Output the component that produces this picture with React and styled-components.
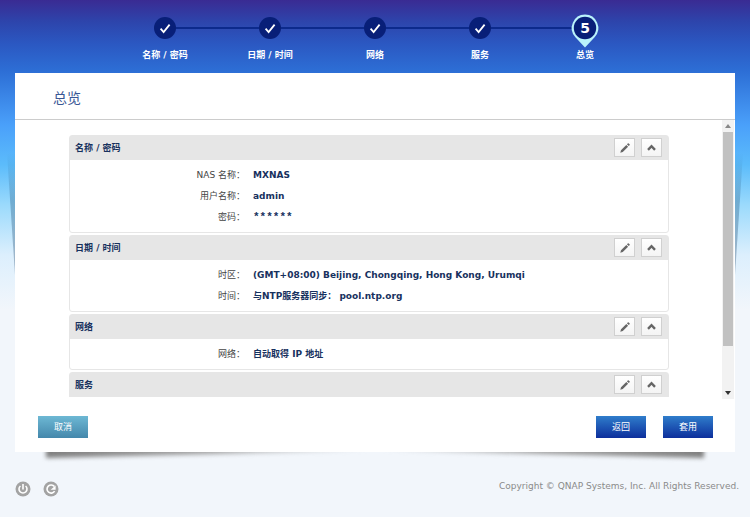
import { useRef, useState } from "react";
import styled, { createGlobalStyle } from "styled-components";

const GlobalStyle = createGlobalStyle`
  * {
    box-sizing: border-box;
  }

  body {
    margin: 0;
    color: #444;
    font-family: "DejaVu Sans", "Noto Sans CJK SC", sans-serif;
    font-size: 9px;
    line-height: 12px;
  }

  button {
    padding: 0;
    border: none;
    font: inherit;
    cursor: pointer;
  }
`;

const Page = styled.div`
  display: flex;
  flex-direction: column;
  height: 100vh;
  min-height: 400px;
  overflow: hidden;
  background: linear-gradient(
    #3a2b93 0,
    #2d45ac 22px,
    #2b58c2 44px,
    #2d6fd6 72px,
    #4aa0fa 125px,
    #5cbcfb 165px,
    #9bdafc 205px,
    #dceffd 255px,
    #f2f6fb 310px
  );
`;

const Steps = styled.ol`
  display: flex;
  justify-content: center;
  flex: none;
  height: 73px;
  margin: 0;
  padding: 15px 0 0;
  list-style: none;
`;

const Step = styled.li`
  display: flex;
  flex-direction: column;
  gap: 8px;
  width: 105px;
  color: #fff;
  font-weight: bold;
  text-align: center;
`;

const MarkerRow = styled.div`
  display: flex;
  align-items: center;
  height: 26px;

  & svg {
    flex: none;
    overflow: visible;
  }
`;

const Line = styled.span`
  flex: 1;
  height: 2px;
  background: ${(props) => (props.$hidden ? "transparent" : "#0c2a8c")};
`;

const Panel = styled.main`
  position: relative;
  z-index: 0;
  display: flex;
  flex: 1;
  flex-direction: column;
  min-height: 0;
  margin: 0 15px;
`;

const PanelBody = styled.div`
  display: flex;
  flex: 1;
  flex-direction: column;
  min-height: 0;
  background: #fff;
`;

const SideShadow = styled.span`
  position: absolute;
  z-index: -1;
  top: 80px;
  ${(props) => props.$side}: -8px;
  width: 8px;
  height: 122px;
  background: linear-gradient(
    rgba(30, 90, 140, 0),
    rgba(40, 90, 130, 0.35) 40%,
    rgba(60, 90, 120, 0.4)
  );
  clip-path: ${(props) =>
    props.$side === "left"
      ? "polygon(0 0, 100% 0, 100% 100%)"
      : "polygon(100% 0, 0 0, 0 100%)"};
`;

const Curl = styled.div`
  position: absolute;
  z-index: -1;
  inset: 0;
  filter: blur(2px);
`;

const CurlShadow = styled.span`
  position: absolute;
  bottom: -7px;
  ${(props) => props.$side}: 31px;
  width: 45%;
  height: 14px;
  background: linear-gradient(
    to ${(props) => (props.$side === "left" ? "right" : "left")},
    #808080,
    #a4a4a4 50%,
    rgba(200, 200, 200, 0)
  );
  clip-path: ${(props) =>
    props.$side === "left"
      ? "polygon(0 0, 100% 0, 100% 40%, 0 92%)"
      : "polygon(0 0, 100% 0, 100% 92%, 0 40%)"};
`;

const Title = styled.h1`
  flex: none;
  height: 47px;
  margin: 0;
  padding: 15px 38px;
  border-bottom: 1px solid #ccc;
  color: #3a5795;
  font-size: 14px;
  font-weight: normal;
  line-height: 20px;
`;

const ScrollArea = styled.div`
  display: flex;
  flex: 1;
  min-height: 0;
`;

const List = styled.div`
  display: flex;
  flex: 1;
  flex-direction: column;
  gap: 2px;
  margin-bottom: 2px;
  padding: 15px 53px 15px 54px;
  overflow: auto;
  scrollbar-width: none;
`;

const Group = styled.section`
  flex: none;
  border: 1px solid #e6e6e6;
  border-radius: 3px;
`;

const GroupHeader = styled.header`
  display: flex;
  align-items: center;
  gap: 6px;
  height: 24px;
  padding: 0 6px 1px 5px;
  background: #e6e6e6;
`;

const GroupTitle = styled.h2`
  flex: 1;
  margin: 0;
  color: #17315e;
  font-size: 9px;
`;

const IconButton = styled.button`
  display: flex;
  align-items: center;
  justify-content: center;
  width: 21px;
  height: 19px;
  border: 1px solid #d0d0d0;
  background: linear-gradient(#fff, #f4f4f4);
`;

const Fields = styled.dl`
  display: grid;
  grid-template-columns: 175px 1fr;
  column-gap: 8px;
  margin: 0;
  padding: 5px 0 4px;
  line-height: 21px;
`;

const Label = styled.dt`
  text-align: right;
`;

const Value = styled.dd`
  margin: 0;
  color: #17315e;
  font-weight: bold;
`;

const Masked = styled.span`
  font-family: "Liberation Mono", monospace;
  font-size: 11px;
`;

const ScrollBar = styled.div`
  display: flex;
  flex: none;
  flex-direction: column;
  width: 12px;
  margin-right: 1px;
  padding: 0 1px;
  background: #f2f2f2;
`;

const ScrollButton = styled.button`
  display: flex;
  align-items: center;
  justify-content: center;
  height: 12px;
  background: none;
`;

const Track = styled.div`
  flex: 1;
`;

const Thumb = styled.div`
  height: 84%;
  background: #c1c1c1;
`;

const Actions = styled.div`
  display: flex;
  flex: none;
  align-items: flex-start;
  gap: 17px;
  height: 53px;
  padding: 17px 22px 0 23px;
`;

const Button = styled.button`
  width: 50px;
  height: 22px;
  margin-right: ${(props) => (props.$light ? "auto" : "0")};
  background: ${(props) =>
    props.$light
      ? "linear-gradient(#6db8d4, #4487ab)"
      : "linear-gradient(#2f7dcb, #0d2f9c)"};
  color: #fff;
`;

const Footer = styled.footer`
  display: flex;
  flex: none;
  justify-content: space-between;
  height: 65px;
  padding: 28px 11px 0 15px;
  color: #8a8a8a;
`;

const PowerButtons = styled.div`
  display: flex;
  gap: 12px;
`;

const PowerButton = styled.button`
  width: 16px;
  height: 16px;
  margin-top: 1px;
  background: none;

  & svg {
    display: block;
  }
`;

const steps = ["名称 / 密码", "日期 / 时间", "网络", "服务", "总览"];

const groups = [
  {
    title: "名称 / 密码",
    fields: [
      { label: "NAS 名称：", value: "MXNAS" },
      { label: "用户名称：", value: "admin" },
      { label: "密码：", value: "******", masked: true },
    ],
  },
  {
    title: "日期 / 时间",
    fields: [
      {
        label: "时区：",
        value: "(GMT+08:00) Beijing, Chongqing, Hong Kong, Urumqi",
      },
      { label: "时间：", value: "与NTP服务器同步： pool.ntp.org" },
    ],
  },
  {
    title: "网络",
    fields: [{ label: "网络：", value: "自动取得 IP 地址" }],
  },
  {
    title: "服务",
    fields: [],
  },
];

function DoneMarker() {
  return (
    <svg width="22" height="22" viewBox="0 0 22 22">
      <circle cx="11" cy="11" r="11" fill="#081f78" />
      <path
        d="M6.6 11.6 9.6 15 15.6 7.6"
        fill="none"
        stroke="#fff"
        strokeWidth="1.8"
      />
    </svg>
  );
}

function CurrentMarker({ number }) {
  return (
    <svg width="26" height="26" viewBox="0 0 26 26">
      <path
        d="M13 -.4a13.4 13.4 0 0 1 9.6 22.6L13 32.4 3.4 22.2A13.4 13.4 0 0 1 13 -.4Z"
        fill="#b9f3fb"
      />
      <circle cx="13" cy="13" r="11.2" fill="#081f78" />
      <text
        x="13"
        y="18"
        fill="#fff"
        fontSize="14"
        fontWeight="bold"
        textAnchor="middle"
      >
        {number}
      </text>
    </svg>
  );
}

function PencilIcon() {
  return (
    <svg width="10" height="10" viewBox="0 0 10 10" fill="#666">
      <path d="M.3 9.7 1 7.2 6.3 1.9 8.1 3.7 2.8 9ZM6.9 1.3 7.8.4Q8.3 0 8.7.4L9.6 1.3Q10 1.7 9.6 2.2L8.7 3.1Z" />
    </svg>
  );
}

function ChevronIcon() {
  return (
    <svg width="9" height="7" viewBox="0 0 9 7">
      <path d="M1 5.8 4.5 2.2 8 5.8" fill="none" stroke="#666" strokeWidth="2.4" />
    </svg>
  );
}

function FieldRow({ field }) {
  const { label, value, masked } = field;

  return (
    <>
      <Label>{label}</Label>
      <Value>{masked ? <Masked>{value}</Masked> : value}</Value>
    </>
  );
}

function SummaryGroup({ group }) {
  const [open, setOpen] = useState(true);

  return (
    <Group>
      <GroupHeader>
        <GroupTitle>{group.title}</GroupTitle>
        <IconButton aria-label="编辑">
          <PencilIcon />
        </IconButton>
        <IconButton
          aria-label="收起"
          aria-expanded={open}
          onClick={() => setOpen((open) => !open)}
        >
          <ChevronIcon />
        </IconButton>
      </GroupHeader>
      {open && (
        <Fields>
          {group.fields.map((field) => (
            <FieldRow key={field.label} field={field} />
          ))}
        </Fields>
      )}
    </Group>
  );
}

function App() {
  const listRef = useRef(null);

  function scrollList(amount) {
    listRef.current.scrollBy({ top: amount });
  }

  return (
    <>
      <GlobalStyle />
      <Page>
        <Steps>
          {steps.map((step, i) => (
            <Step key={step}>
              <MarkerRow>
                <Line $hidden={i === 0} />
                {i < steps.length - 1 ? (
                  <DoneMarker />
                ) : (
                  <CurrentMarker number={i + 1} />
                )}
                <Line $hidden={i === steps.length - 1} />
              </MarkerRow>
              {step}
            </Step>
          ))}
        </Steps>

        <Panel>
          <SideShadow $side="left" />
          <SideShadow $side="right" />
          <Curl>
            <CurlShadow $side="left" />
            <CurlShadow $side="right" />
          </Curl>
          <PanelBody>
            <Title>总览</Title>
            <ScrollArea>
              <List ref={listRef}>
                {groups.map((group) => (
                  <SummaryGroup key={group.title} group={group} />
                ))}
              </List>
              <ScrollBar>
                <ScrollButton
                  aria-label="向上滚动"
                  onClick={() => scrollList(-40)}
                >
                  <svg width="6" height="4" viewBox="0 0 6 4" fill="#888">
                    <path d="M0 4 3 0 6 4Z" />
                  </svg>
                </ScrollButton>
                <Track>
                  <Thumb />
                </Track>
                <ScrollButton
                  aria-label="向下滚动"
                  onClick={() => scrollList(40)}
                >
                  <svg width="6" height="4" viewBox="0 0 6 4" fill="#333">
                    <path d="M0 0H6L3 4Z" />
                  </svg>
                </ScrollButton>
              </ScrollBar>
            </ScrollArea>
            <Actions>
              <Button $light>取消</Button>
              <Button>返回</Button>
              <Button>套用</Button>
            </Actions>
          </PanelBody>
        </Panel>

        <Footer>
          <PowerButtons>
            <PowerButton aria-label="关机">
              <svg width="16" height="16" viewBox="0 0 16 16">
                <circle cx="8" cy="8" r="7.5" fill="#a3a3a3" />
                <path
                  d="M5.4 5A4 4 0 1 0 10.6 5M8 3V8.4"
                  fill="none"
                  stroke="#fff"
                  strokeWidth="1.6"
                />
              </svg>
            </PowerButton>
            <PowerButton aria-label="重新启动">
              <svg width="16" height="16" viewBox="0 0 16 16">
                <circle cx="8" cy="8" r="7.5" fill="#a3a3a3" />
                <path
                  d="M11.4 5.6A4.1 4.1 0 1 0 11.6 10.2"
                  fill="none"
                  stroke="#fff"
                  strokeWidth="1.6"
                />
                <path d="M12.6 4.4V8.8H7.6Z" fill="#fff" />
              </svg>
            </PowerButton>
          </PowerButtons>
          <span>Copyright © QNAP Systems, Inc. All Rights Reserved.</span>
        </Footer>
      </Page>
    </>
  );
}

export default App;
